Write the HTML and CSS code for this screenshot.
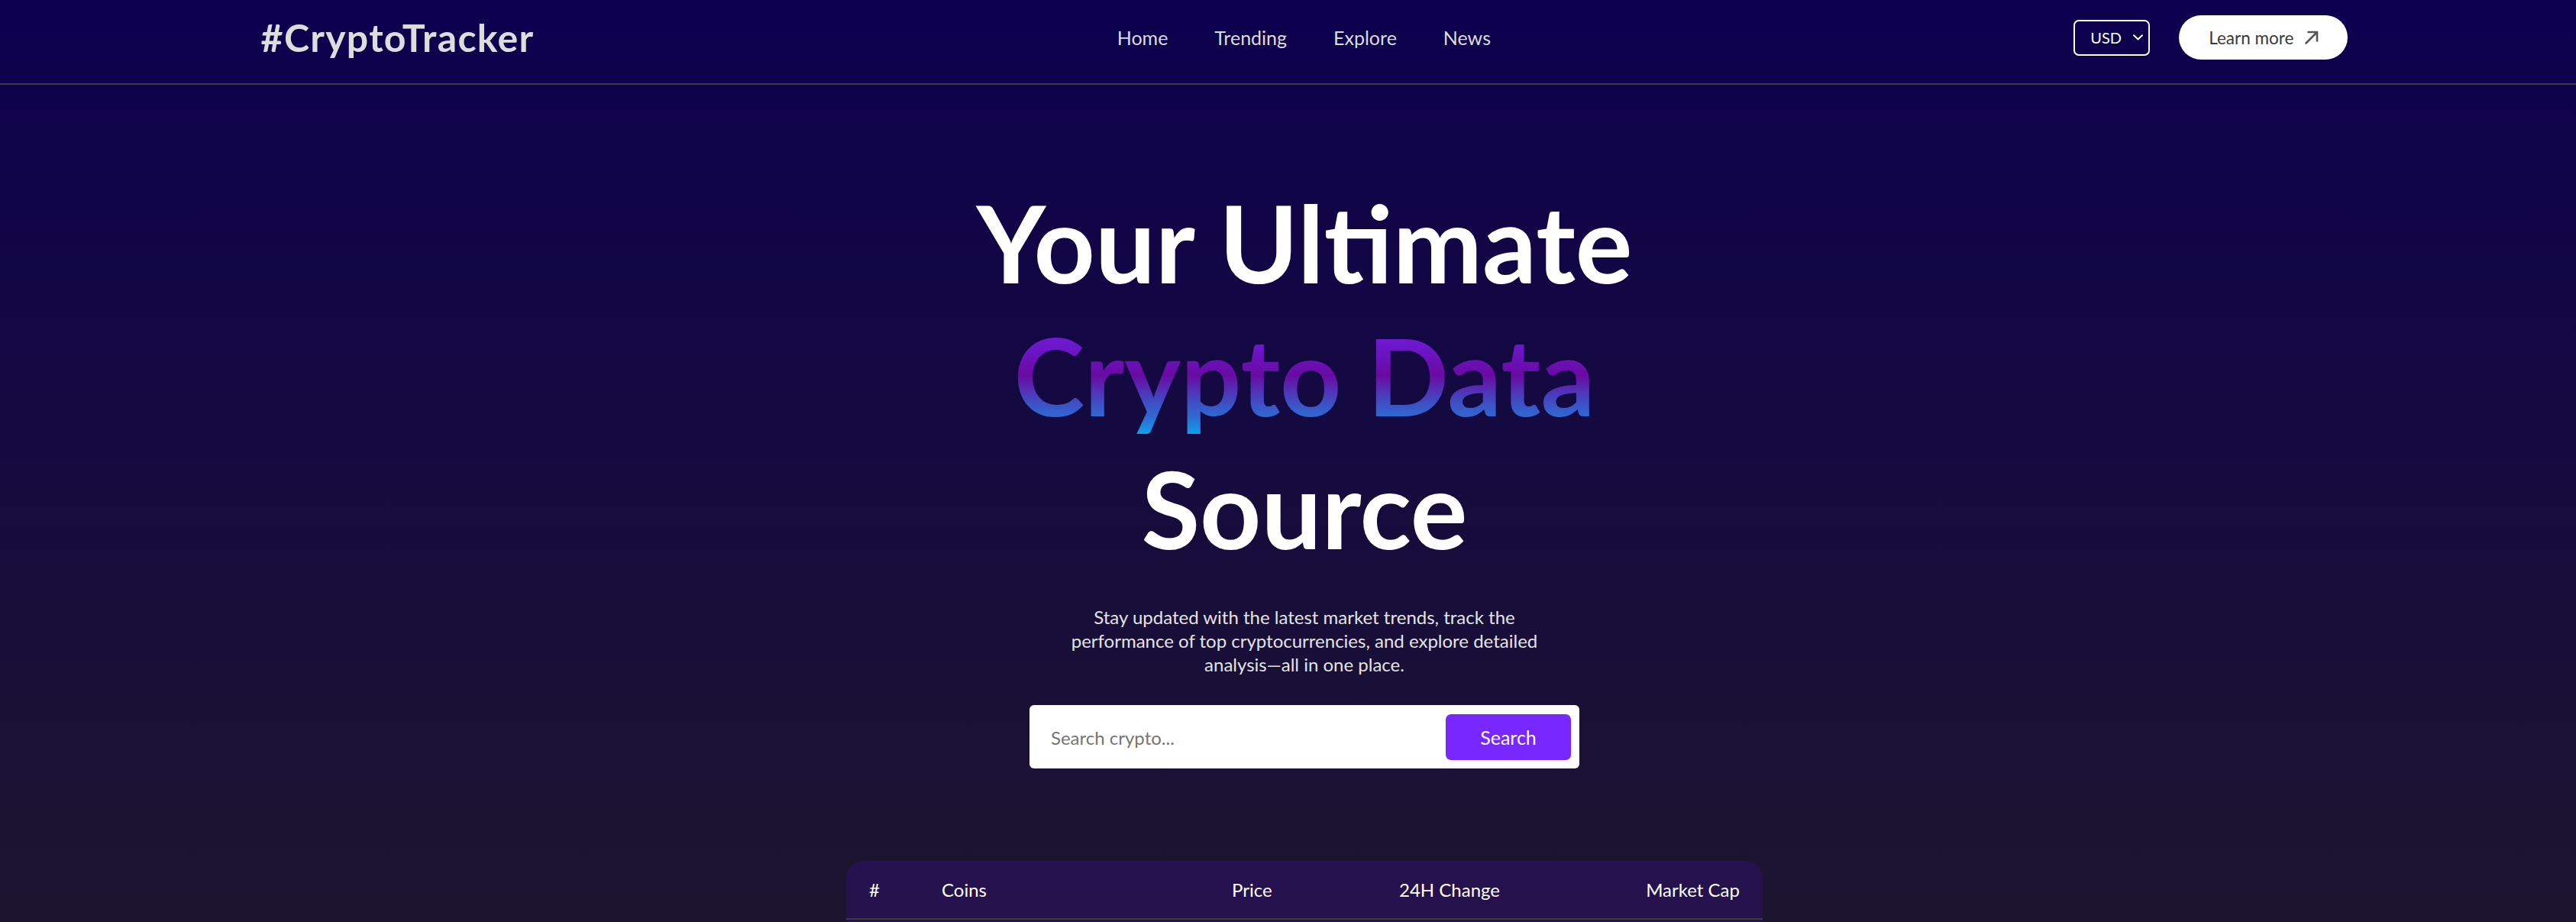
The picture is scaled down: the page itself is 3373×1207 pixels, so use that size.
FILE: index.html
```html
<!DOCTYPE html>
<html lang="en">
<head>
<meta charset="utf-8">
<title>CryptoTracker</title>
<link rel="stylesheet" href="styles.css">
</head>
<body>
<div class="app">
  <header class="navbar">
    <div class="logo">#CryptoTracker</div>
    <ul class="nav-links">
      <li>Home</li>
      <li>Trending</li>
      <li>Explore</li>
      <li>News</li>
    </ul>
    <div class="nav-right">
      <div class="currency">
        <span>USD</span>
        <svg class="chev" width="13" height="8" viewBox="0 0 13 8"><path d="M1 1.2 L6.5 6.5 L12 1.2" fill="none" stroke="#fff" stroke-width="2" stroke-linecap="round" stroke-linejoin="round"/></svg>
      </div>
      <button class="learn-more">Learn more
        <svg class="arrow" width="20" height="18" viewBox="0 0 20 18"><path d="M2.5 16.5 L17 2 M5.5 2 H17 V13.5" fill="none" stroke="#555" stroke-width="2.6" stroke-linecap="round" stroke-linejoin="round"/></svg>
      </button>
    </div>
  </header>

  <section class="hero">
    <h1>Your Ultimate<br><span class="grad">Crypto Data</span><br>Source</h1>
    <p>Stay updated with the latest market trends, track the performance of top cryptocurrencies, and explore detailed analysis—all in one place.</p>
    <form class="search">
      <input type="text" placeholder="Search crypto...">
      <button type="button">Search</button>
    </form>
  </section>

  <section class="crypto-table">
    <div class="table-row table-head">
      <p>#</p>
      <p>Coins</p>
      <p>Price</p>
      <p class="c-change">24H Change</p>
      <p class="c-cap">Market Cap</p>
    </div>
  </section>
</div>
</body>
</html>
```

FILE: styles.css
```css
* {
  box-sizing: border-box;
  margin: 0;
  padding: 0;
}

html, body {
  overflow: hidden;
}

body {
  font-family: Lato, "Noto Sans", sans-serif;
  color: #fff;
  background: #0b004e;
}

.app {
  width: calc(100% + 43px);
  min-height: 100vh;
  background: linear-gradient(#0d004f 0px, #1d152f 1200px, #002834 2400px);
}

/* Navbar */
.navbar {
  display: flex;
  align-items: center;
  justify-content: space-between;
  padding: 20px 10% 31px;
  border-bottom: 2px solid #3c3c3c;
  color: #ddd;
}

.logo {
  font-size: 50px;
  font-weight: 700;
  letter-spacing: 1.3px;
  line-height: 58px;
  color: #dddddd;
}

.nav-links {
  display: flex;
  gap: 61px;
  list-style: none;
  font-size: 25px;
  color: #dddddd;
}

.nav-right {
  display: flex;
  align-items: center;
  gap: 38px;
}

.currency {
  display: flex;
  align-items: center;
  justify-content: space-between;
  width: 100px;
  height: 47px;
  padding: 0 7px 0 20px;
  border: 2px solid #fff;
  border-radius: 7px;
  color: #fff;
  font-size: 20px;
}

.learn-more {
  display: flex;
  align-items: center;
  gap: 14px;
  height: 58px;
  padding: 0 37px 0 39px;
  border: none;
  border-radius: 29px;
  background: #fff;
  color: #393939;
  font-family: Lato, "Noto Sans", sans-serif;
  font-size: 22.5px;
}

/* Hero */
.hero {
  width: 900px;
  margin: 119px auto 0;
  display: flex;
  flex-direction: column;
  align-items: center;
  text-align: center;
}

.hero h1 {
  font-size: 140px;
  line-height: 174px;
  font-weight: 700;
  color: #fff;
}

.grad {
  background: linear-gradient(to bottom, #7a22ee 0%, #6c16c8 30%, #6a0aa3 50%, #3d50c4 72%, #2f68d2 82%, #05b2f0 100%);
  -webkit-background-clip: text;
  background-clip: text;
  color: transparent;
}

.hero p {
  width: 650px;
  margin-top: 40px;
  font-size: 24px;
  line-height: 31px;
  color: #e3e3e3;
}

.search {
  width: 720px;
  height: 83px;
  margin-top: 38px;
  padding: 12px 11px 11px 12px;
  background: #fff;
  border-radius: 6px;
  display: flex;
  align-items: center;
  gap: 10px;
}

.search input {
  flex: 1;
  min-width: 0;
  border: none;
  outline: none;
  padding-left: 16px;
  font-family: Lato, "Noto Sans", sans-serif;
  font-size: 24px;
  color: #333;
  background: transparent;
}

.search input::placeholder {
  color: #757575;
}

.search button {
  width: 164px;
  height: 60px;
  border: none;
  border-radius: 7px;
  background: #7927ff;
  color: #fff;
  font-family: Lato, "Noto Sans", sans-serif;
  font-size: 25px;
}

/* Table */
.crypto-table {
  width: 1200px;
  min-height: 420px;
  margin: 121px auto 0;
  border-radius: 22px;
  background: linear-gradient(rgba(84, 3, 255, 0.15), rgba(105, 2, 153, 0.15));
}

.table-row {
  display: grid;
  grid-template-columns: 0.5fr 2fr 1fr 1fr 1.5fr;
  align-items: center;
  padding: 22.5px 30px;
  border-bottom: 2px solid #3c3c3c;
  font-size: 24px;
  line-height: 30px;
}

.c-change {
  text-align: center;
}

.c-cap {
  text-align: right;
}
```
